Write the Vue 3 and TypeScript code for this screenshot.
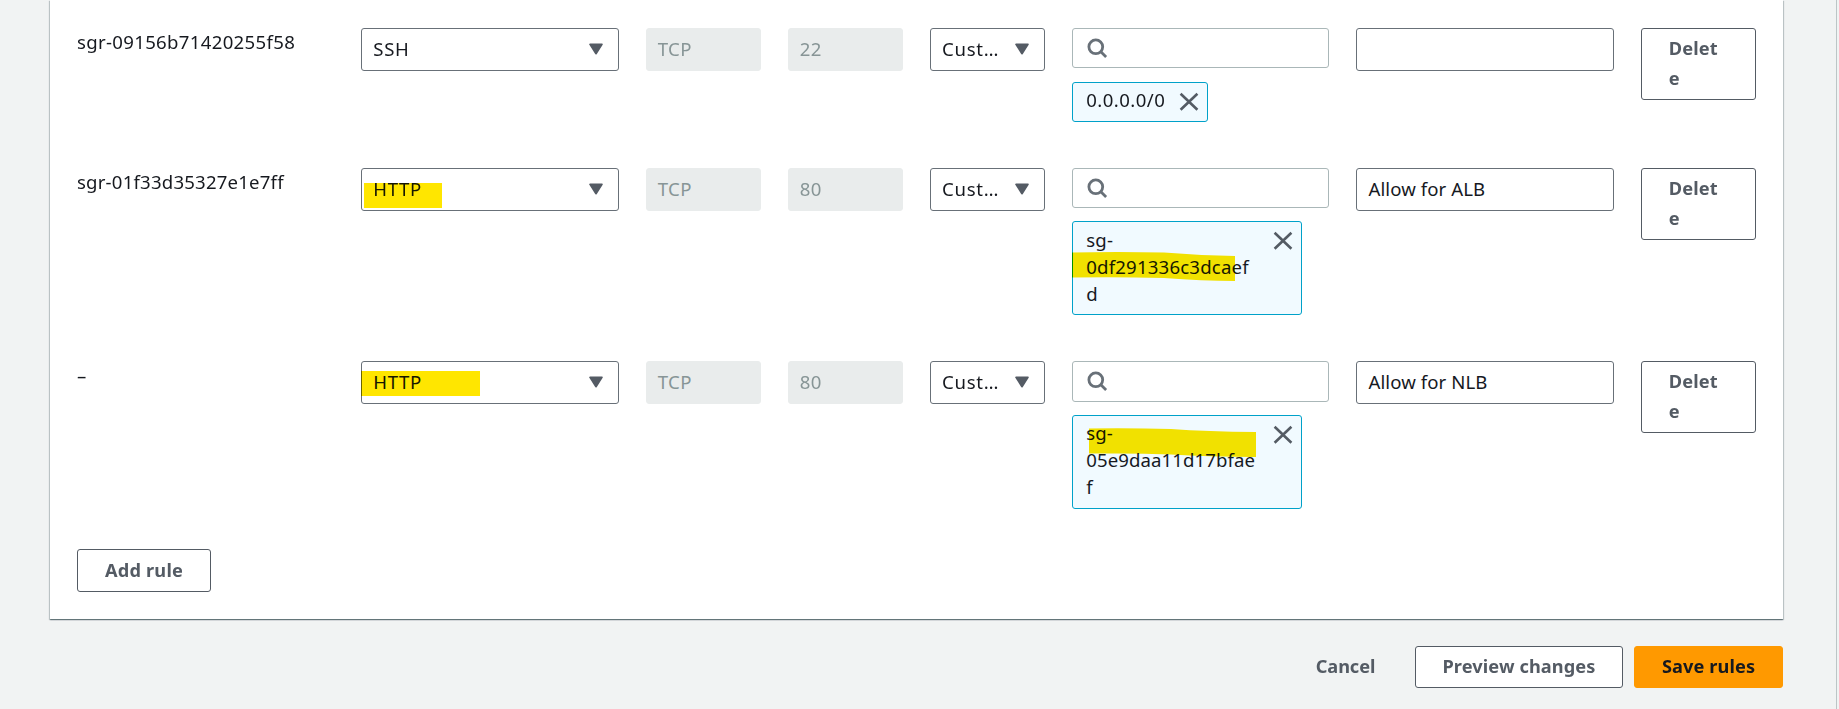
<script setup lang="ts">
interface Rule {
  key: string
  id: string
  type: string
  port: string
  description: string
  source: string[]
  mark: 'none' | 'short' | 'long'
}

const rules: Rule[] = [
  { key: 'ssh', id: 'sgr-09156b71420255f58', type: 'SSH', port: '22', description: '', source: ['0.0.0.0/0'], mark: 'none' },
  { key: 'alb', id: 'sgr-01f33d35327e1e7ff', type: 'HTTP', port: '80', description: 'Allow for ALB', source: ['sg-', '0df291336c3dcaef', 'd'], mark: 'short' },
  { key: 'nlb', id: '–', type: 'HTTP', port: '80', description: 'Allow for NLB', source: ['sg-', '05e9daa11d17bfae', 'f'], mark: 'long' },
]
</script>

<template>
  <div class="page">
    <main class="content">
      <section class="card">
        <div class="rules">
          <div v-for="rule in rules" :key="rule.key" class="rule" :class="rule.key">
            <div class="rule-id">{{ rule.id }}</div>
            <div class="field type">
              <span>{{ rule.type }}</span>
              <svg class="caret" width="14" height="12" viewBox="0 0 14 12">
                <path d="M1 1.3h12L7 10.7z" />
              </svg>
              <i v-if="rule.mark !== 'none'" class="marker" :class="rule.mark"></i>
            </div>
            <div class="field disabled tcp">TCP</div>
            <div class="field disabled">{{ rule.port }}</div>
            <div class="field custom">
              <span>Cust…</span>
              <svg class="caret" width="14" height="12" viewBox="0 0 14 12">
                <path d="M1 1.3h12L7 10.7z" />
              </svg>
            </div>
            <div class="source">
              <div class="search">
                <svg width="21" height="21" viewBox="0 0 21 21">
                  <circle cx="8.8" cy="8.8" r="6.9" />
                  <path d="M13.6 13.6l5.5 5.5" />
                </svg>
              </div>
              <div class="chip" :class="{ wide: rule.source.length > 1 }">
                <div class="chip-text">
                  <div v-for="line in rule.source" :key="line">{{ line }}</div>
                </div>
                <svg class="close" width="20" height="20" viewBox="0 0 20 20">
                  <path d="M1.6 1.7l16.8 16M18.4 1.7L1.6 17.7" />
                </svg>
                <svg v-if="rule.mark === 'short'" class="stroke alb-stroke" width="163" height="29" viewBox="0 0 163 29">
                  <path d="M0 .6Q40-.5 92 .5Q128 3.5 163 4V29Q130 29 92 26Q40 24.5 0 25.6z" />
                </svg>
                <svg v-if="rule.mark === 'long'" class="stroke nlb-stroke" width="167" height="29" viewBox="0 0 167 29">
                  <path d="M0 .4Q44-.2 82 1Q118 3.6 167 4V29Q118 28.8 82 26.4Q44 25 0 25.6z" />
                </svg>
              </div>
            </div>
            <div class="field description">{{ rule.description }}</div>
            <button class="button delete"><span>Delet</span><span>e</span></button>
          </div>
        </div>
        <button class="button add">Add rule</button>
      </section>
      <footer class="actions">
        <button class="button link">Cancel</button>
        <button class="button preview">Preview changes</button>
        <button class="button primary">Save rules</button>
      </footer>
    </main>
    <aside class="edge"></aside>
  </div>
</template>

<style>
body {
  margin: 0;
  background: #f1f3f3;
}
</style>

<style scoped>
.page {
  box-sizing: border-box;
  width: 1839px;
  height: 709px;
  overflow: hidden;
  display: flex;
  justify-content: space-between;
  background: #f1f3f3;
  color: #16191f;
  font: 18.6px/27px "Noto Sans", "Open Sans", sans-serif;
  letter-spacing: 0.08px;
}
.content {
  width: 1733px;
  margin-left: 50px;
}
.edge {
  width: 2px;
  border-left: 1px solid #bcc5c6;
}
.card {
  box-sizing: border-box;
  height: 619px;
  padding: 28px 27px 0;
  background: #fff;
  box-shadow: 0 1px 1px rgba(0, 28, 36, 0.4), 1px 1px 1px rgba(0, 28, 36, 0.17), -1px 1px 1px rgba(0, 28, 36, 0.17);
}
.rules {
  display: flex;
  flex-direction: column;
  gap: 46px;
}
.rule {
  display: grid;
  grid-template-columns: repeat(12, 1fr);
  column-gap: 27px;
  align-items: start;
}
.rule-id,
.type,
.source,
.description {
  grid-column: span 2;
}
.rule-id {
  letter-spacing: 0.32px;
}
.alb .rule-id {
  letter-spacing: 0.2px;
}
.nlb .rule-id {
  padding-top: 1px;
}
.field {
  box-sizing: border-box;
  height: 43px;
  padding: 0 15px 2px 11px;
  display: flex;
  align-items: center;
  justify-content: space-between;
  position: relative;
  border: 1px solid #687078;
  border-radius: 3px;
  background: #fff;
  white-space: nowrap;
}
.type {
  letter-spacing: 0.6px;
}
.custom {
  letter-spacing: 0.7px;
}
.disabled {
  border-color: #e9ecec;
  background: #e9ecec;
  color: #879596;
  letter-spacing: 0.4px;
}
.caret {
  display: block;
  margin-top: 1px;
  fill: #545b64;
  stroke: #545b64;
  stroke-width: 1.6;
  stroke-linejoin: round;
}
.source {
  display: flex;
  flex-direction: column;
  align-items: flex-start;
  gap: 14px;
}
.alb .source,
.nlb .source {
  gap: 13px;
}
.search {
  box-sizing: border-box;
  width: 100%;
  height: 40px;
  padding: 9px 14px;
  border: 1px solid #aab7b8;
  border-radius: 3px;
  background: #fff;
}
.nlb .search {
  height: 41px;
}
.search svg {
  display: block;
  fill: none;
  stroke: #687078;
  stroke-width: 2.8;
}
.chip {
  box-sizing: border-box;
  height: 40px;
  width: 136px;
  padding: 3px 8px 0 13px;
  display: flex;
  justify-content: space-between;
  align-items: flex-start;
  position: relative;
  border: 1px solid #00a1c9;
  border-radius: 3px;
  background: #f1faff;
  letter-spacing: 0.45px;
  white-space: nowrap;
}
.chip.wide {
  width: 230px;
  height: 94px;
  letter-spacing: 0.2px;
}
.alb .chip-text {
  padding-top: 1px;
}
.nlb .chip.wide {
  letter-spacing: 0.1px;
}
.close {
  display: block;
  margin-top: 6px;
  fill: none;
  stroke: #545b64;
  stroke-width: 2.6;
}
.marker,
.stroke {
  position: absolute;
  mix-blend-mode: multiply;
}
.marker {
  height: 25px;
  background: #ffe600;
}
.marker.short {
  left: 2px;
  top: 14px;
  width: 78px;
}
.marker.long {
  left: -1px;
  top: 8.5px;
  width: 119px;
}
.stroke {
  fill: #ffe600;
}
.alb-stroke {
  left: -1px;
  top: 30px;
}
.nlb-stroke {
  left: 16px;
  top: 12px;
}
.button {
  box-sizing: border-box;
  height: 43px;
  margin: 0;
  padding: 0 26px;
  border: 1px solid #545b64;
  border-radius: 3px;
  background: #fff;
  color: #545b64;
  font: 700 18.2px/27px "Noto Sans", "Open Sans", sans-serif;
  letter-spacing: 0.1px;
  white-space: nowrap;
}
.delete {
  height: 72px;
  padding: 4px 0 0 27px;
  display: flex;
  flex-direction: column;
  justify-content: flex-start;
  align-items: flex-start;
  line-height: 30px;
}
.add {
  display: block;
  width: 134px;
  margin-top: 40px;
  letter-spacing: 0.2px;
}
.actions {
  margin-top: 27px;
  display: flex;
  justify-content: flex-end;
}
.actions .button {
  height: 42px;
  padding: 0 0 2px;
}
.actions .link {
  width: 115px;
  margin-right: 12px;
  border-color: transparent;
  background: transparent;
  letter-spacing: -0.1px;
}
.preview {
  width: 208px;
  margin-right: 11px;
}
.actions .primary {
  width: 149px;
  border-color: #ff9900;
  background: #ff9900;
  color: #16191f;
}
</style>
